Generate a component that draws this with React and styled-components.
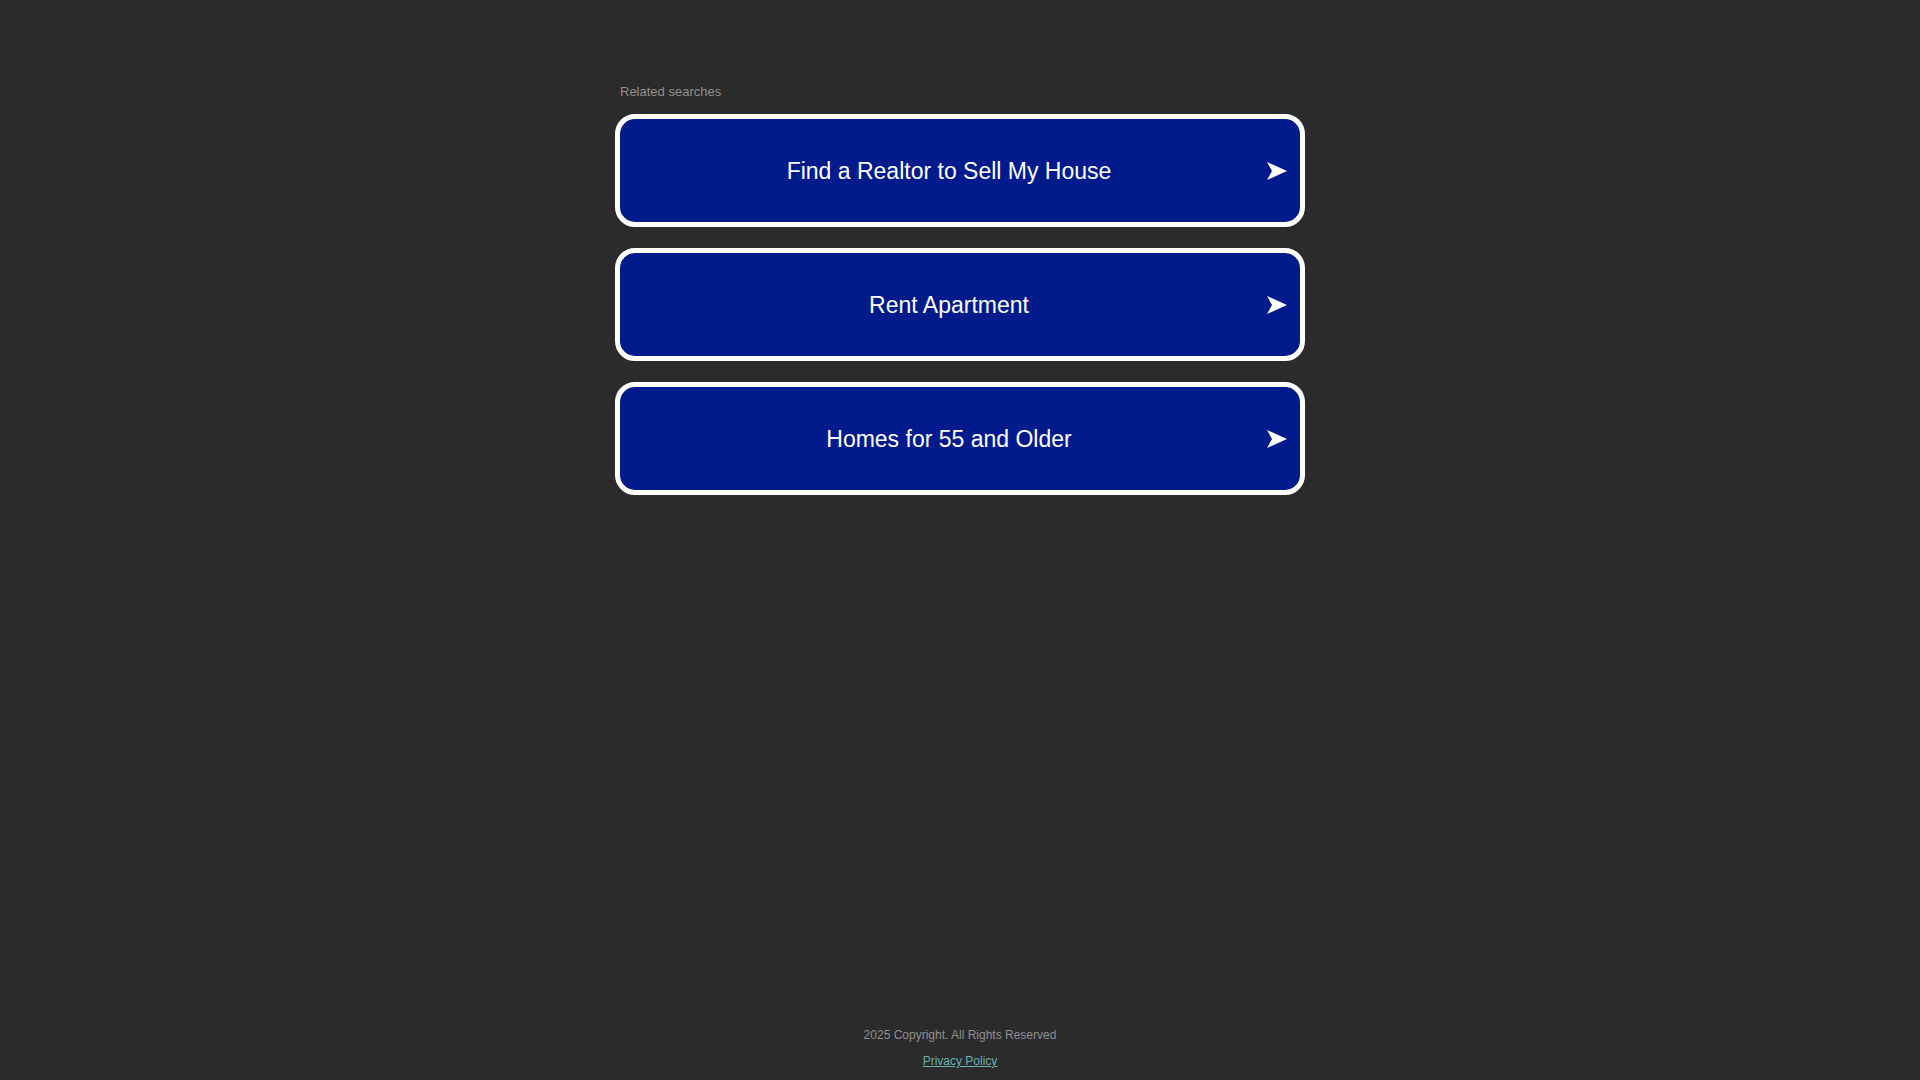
import React from 'react'
import styled, { createGlobalStyle } from 'styled-components'

const GlobalStyle = createGlobalStyle`
  html, body {
    margin: 0;
    padding: 0;
    background-color: #2b2b2b;
    font-family: "Liberation Sans", Arial, sans-serif;
  }
`

const Page = styled.div`
  min-height: 100vh;
  display: flex;
  flex-direction: column;
  align-items: center;
  box-sizing: border-box;
`

const Content = styled.main`
  width: 690px;
  padding-top: 84px;
  flex: 1;
`

const Heading = styled.div`
  color: #8f8f8f;
  font-size: 13px;
  line-height: 16px;
  padding-left: 5px;
  margin-bottom: 14px;
`

const List = styled.div`
  display: flex;
  flex-direction: column;
  gap: 21px;
`

const SearchLink = styled.a`
  display: flex;
  align-items: center;
  height: 113px;
  box-sizing: border-box;
  border: 5px solid #ffffff;
  border-radius: 20px;
  background-color: #011b8c;
  color: #ffffff;
  text-decoration: none;
  padding: 0 12px 0 12px;
  cursor: pointer;
`

const Label = styled.span`
  flex: 1;
  text-align: center;
  font-size: 23px;
  line-height: 26px;
`

const Arrow = styled.svg`
  width: 22px;
  height: 18px;
  flex: none;
`

const Footer = styled.footer`
  display: flex;
  flex-direction: column;
  align-items: center;
  gap: 12px;
  padding-bottom: 12px;
  font-size: 12px;
  line-height: 14px;
`

const Copy = styled.div`
  color: #8f8f8f;
`

const Privacy = styled.a`
  color: #6aaeb3;
  text-decoration: underline;
`

const searches = [
  'Find a Realtor to Sell My House',
  'Rent Apartment',
  'Homes for 55 and Older'
]

const ArrowIcon = () => (
  <Arrow viewBox="0 0 22 18">
    <path d="M1 0 L21 9 L1 18 L6 9 Z" fill="#ffffff" />
  </Arrow>
)

const App = () => (
  <Page>
    <GlobalStyle />
    <Content>
      <Heading>Related searches</Heading>
      <List>
        {searches.map(s => (
          <SearchLink key={s}>
            <Label>{s}</Label>
            <ArrowIcon />
          </SearchLink>
        ))}
      </List>
    </Content>
    <Footer>
      <Copy>2025 Copyright. All Rights Reserved</Copy>
      <Privacy href="#">Privacy Policy</Privacy>
    </Footer>
  </Page>
)

export default App
